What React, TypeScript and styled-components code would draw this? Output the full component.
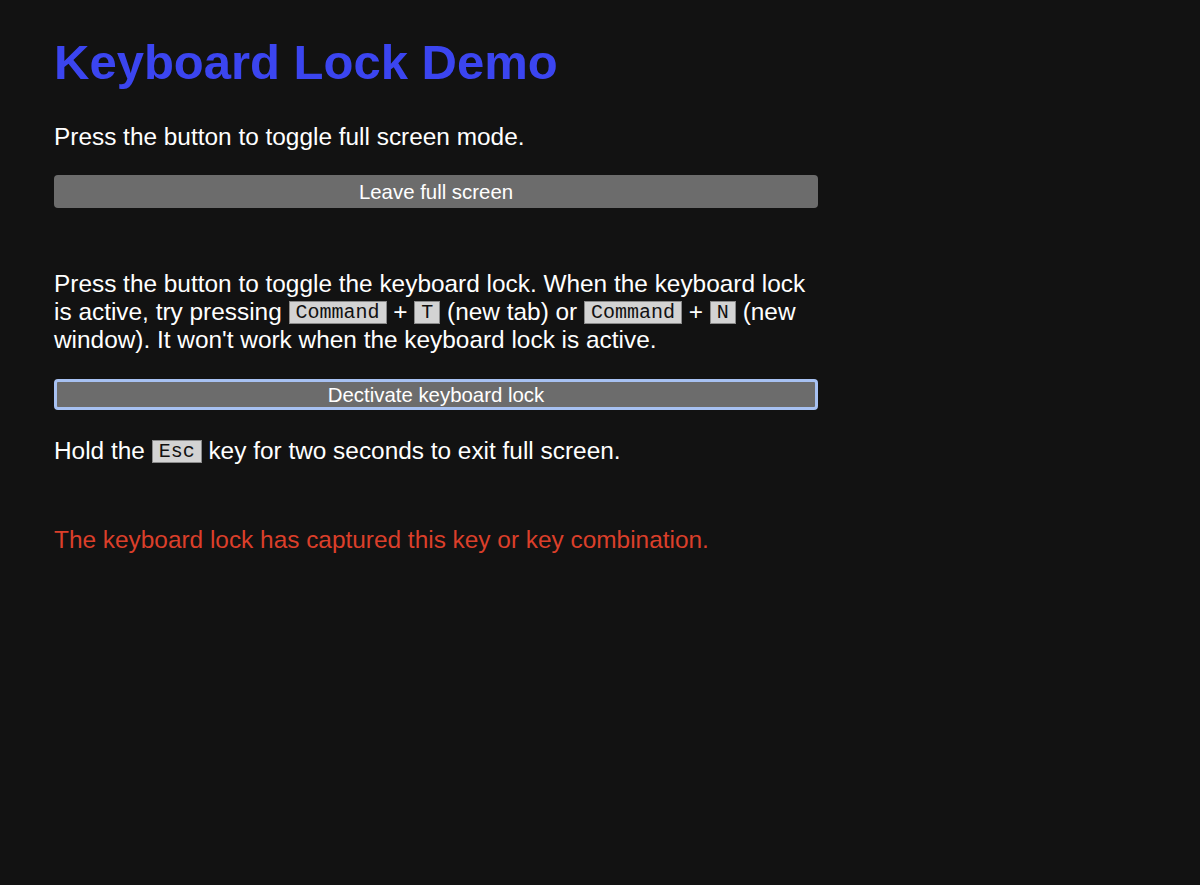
import React from "react";
import styled, { createGlobalStyle } from "styled-components";

const Global = createGlobalStyle`
  html, body {
    margin: 0;
    padding: 0;
    background: #121212;
  }
  body {
    font-family: "Liberation Sans", Arial, Helvetica, sans-serif;
    color: #ffffff;
  }
`;

const Page = styled.main`
  min-height: 885px;
  box-sizing: border-box;
  padding: 35px 0 0 54px;
  background: #121212;
`;

const Column = styled.div`
  width: 764px;
  display: flex;
  flex-direction: column;
`;

const Title = styled.h1`
  margin: 0;
  font-size: 49px;
  line-height: 55px;
  font-weight: 700;
  color: #3b45f0;
`;

const Text = styled.p<{ $top: number; $color?: string }>`
  margin: ${(p) => p.$top}px 0 0 0;
  font-size: 24.4px;
  line-height: 28px;
  color: ${(p) => p.$color ?? "#ffffff"};
`;

const Button = styled.button<{ $top: number; $focused?: boolean }>`
  margin-top: ${(p) => p.$top}px;
  width: 764px;
  height: ${(p) => (p.$focused ? 31 : 33)}px;
  box-sizing: border-box;
  background: #6c6c6c;
  color: #ffffff;
  font-family: "Liberation Sans", Arial, Helvetica, sans-serif;
  font-size: 20.4px;
  line-height: 24px;
  border-radius: 4px;
  padding: 0;
  cursor: pointer;
  border: ${(p) => (p.$focused ? "3px solid #a7c1f2" : "none")};
`;

const Kbd = styled.kbd`
  display: inline-block;
  font-family: "Liberation Mono", "Courier New", monospace;
  font-size: 20px;
  line-height: 21px;
  padding: 0 6px;
  background: #d3d3d3;
  color: #111111;
  border: 1px solid #8a8a8a;
  vertical-align: 2px;
`;

export default function App() {
  return (
    <>
      <Global />
      <Page>
        <Column>
          <Title>Keyboard Lock Demo</Title>
          <Text $top={33}>Press the button to toggle full screen mode.</Text>
          <Button $top={24}>Leave full screen</Button>
          <Text $top={62}>
            Press the button to toggle the keyboard lock. When the keyboard lock
            is active, try pressing <Kbd>Command</Kbd> + <Kbd>T</Kbd> (new tab) or{" "}
            <Kbd>Command</Kbd> + <Kbd>N</Kbd> (new window). It won't work when the
            keyboard lock is active.
          </Text>
          <Button $top={25} $focused>
            Dectivate keyboard lock
          </Button>
          <Text $top={27}>
            Hold the <Kbd>Esc</Kbd> key for two seconds to exit full screen.
          </Text>
          <Text $top={61} $color="#db3f2a">
            The keyboard lock has captured this key or key combination.
          </Text>
        </Column>
      </Page>
    </>
  );
}
